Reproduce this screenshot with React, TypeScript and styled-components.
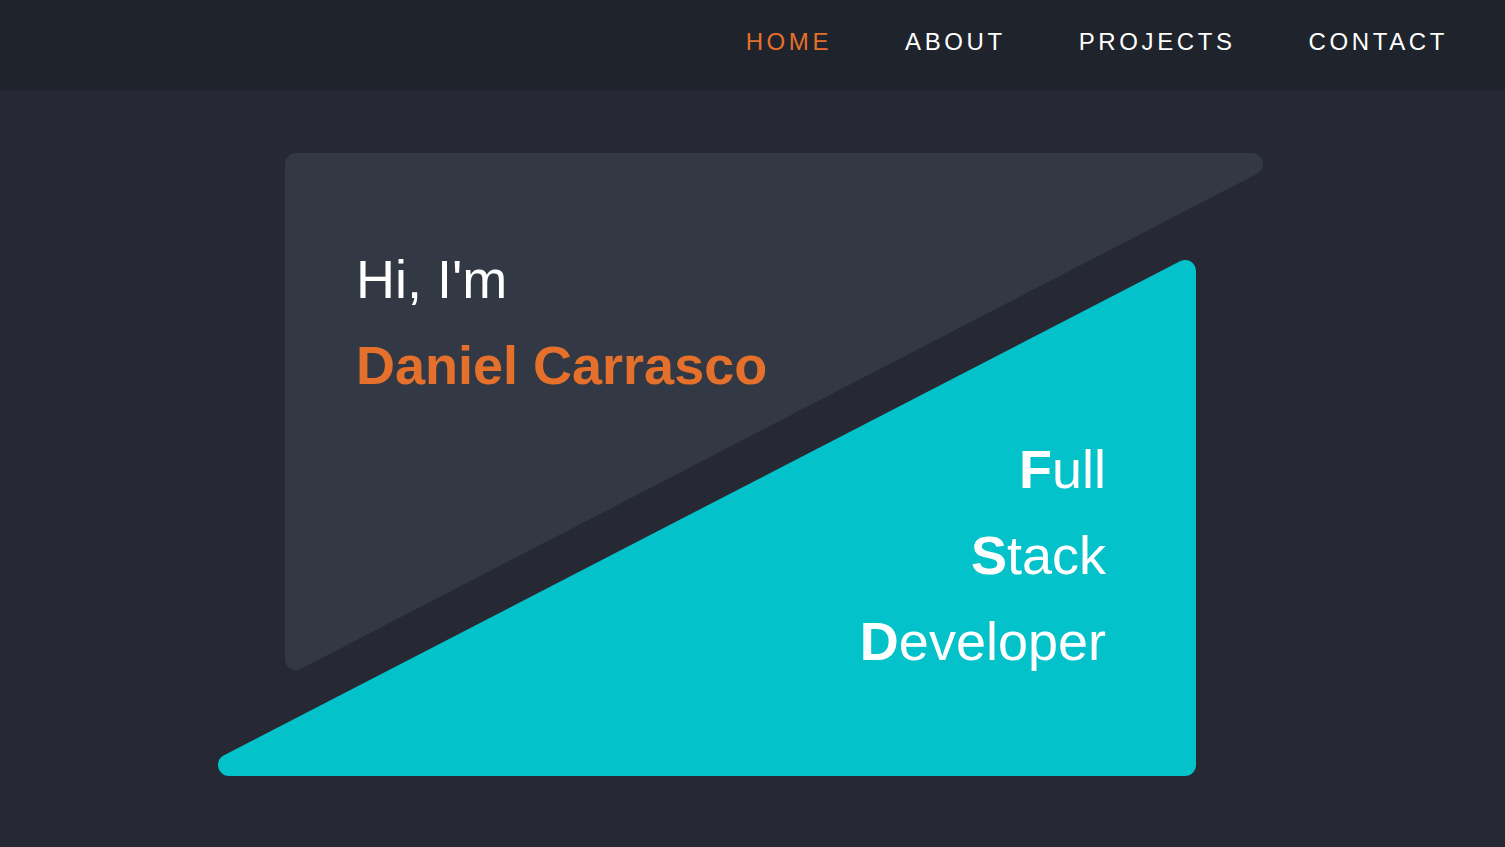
import React from 'react';
import styled, { createGlobalStyle } from 'styled-components';

const palette = {
  nav: '#1f232b',
  page: '#262934',
  slate: '#333944',
  cyan: '#04c2c9',
  orange: '#e5702b',
  white: '#ffffff',
};

const GlobalStyle = createGlobalStyle`
  html, body {
    margin: 0;
    padding: 0;
    background: ${palette.page};
    font-family: "Liberation Sans", Arial, sans-serif;
    overflow: hidden;
  }
  * {
    box-sizing: border-box;
  }
`;

const Page = styled.div`
  min-height: 847px;
  background: ${palette.page};
`;

const NavBar = styled.nav`
  height: 90px;
  background: ${palette.nav};
  display: flex;
  justify-content: flex-end;
  align-items: center;
  padding: 0 57px 6px 0;
`;

const NavList = styled.ul`
  display: flex;
  gap: 73px;
  margin: 0;
  padding: 0;
  list-style: none;
`;

const NavLink = styled.li<{ active?: boolean }>`
  font-size: 24px;
  letter-spacing: 3.6px;
  line-height: 28px;
  color: ${(props) => (props.active ? palette.orange : palette.white)};
  cursor: pointer;
`;

// 두 삼각형을 같은 grid 위에 겹쳐 놓는다
const Stage = styled.section`
  display: grid;
  grid-template-columns: 67px 911px 67px;
  grid-template-rows: 107px 410px 106px;
  width: 1045px;
  margin: 63px 0 0 218px;
`;

const Panel = styled.div<{ area: string }>`
  grid-area: ${(props) => props.area};
  display: grid;
`;

const Shape = styled.svg`
  grid-area: 1 / 1;
  width: 100%;
  height: 100%;
  display: block;
`;

const PanelContent = styled.div<{ align: 'start' | 'end' }>`
  grid-area: 1 / 1;
  display: flex;
  flex-direction: column;
  justify-content: ${(props) => (props.align === 'start' ? 'flex-start' : 'flex-end')};
  align-items: ${(props) => (props.align === 'start' ? 'flex-start' : 'flex-end')};
  padding: ${(props) =>
    props.align === 'start' ? '83px 0 0 71px' : '0 90px 92px 0'};
  position: relative;
`;

const Line = styled.p<{ color?: string; bold?: boolean }>`
  margin: 0;
  font-size: 54px;
  line-height: 86px;
  color: ${(props) => props.color || palette.white};
  font-weight: ${(props) => (props.bold ? 700 : 400)};
  white-space: nowrap;

  b {
    font-weight: 700;
  }
`;

const W = 978;
const H = 516;
const R = 11;

function Triangle({ corner, color }: { corner: 'topLeft' | 'bottomRight'; color: string }) {
  const points =
    corner === 'topLeft'
      ? `${R},${R} ${W - R},${R} ${R},${H - R}`
      : `${R},${H - R} ${W - R},${R} ${W - R},${H - R}`;
  return (
    <Shape viewBox={`0 0 ${W} ${H}`} preserveAspectRatio="none">
      <polygon
        points={points}
        fill={color}
        stroke={color}
        strokeWidth={R * 2}
        strokeLinejoin="round"
      />
    </Shape>
  );
}

const links = ['HOME', 'ABOUT', 'PROJECTS', 'CONTACT'];

export default function App() {
  return (
    <Page>
      <GlobalStyle />
      <NavBar>
        <NavList>
          {links.map((link, index) => (
            <NavLink key={link} active={index === 0}>
              {link}
            </NavLink>
          ))}
        </NavList>
      </NavBar>

      <Stage>
        <Panel area="1 / 2 / 3 / 4">
          <Triangle corner="topLeft" color={palette.slate} />
          <PanelContent align="start">
            <Line>Hi, I'm</Line>
            <Line color={palette.orange} bold>
              Daniel Carrasco
            </Line>
          </PanelContent>
        </Panel>

        <Panel area="2 / 1 / 4 / 3">
          <Triangle corner="bottomRight" color={palette.cyan} />
          <PanelContent align="end">
            <Line>
              <b>F</b>ull
            </Line>
            <Line>
              <b>S</b>tack
            </Line>
            <Line>
              <b>D</b>eveloper
            </Line>
          </PanelContent>
        </Panel>
      </Stage>
    </Page>
  );
}
